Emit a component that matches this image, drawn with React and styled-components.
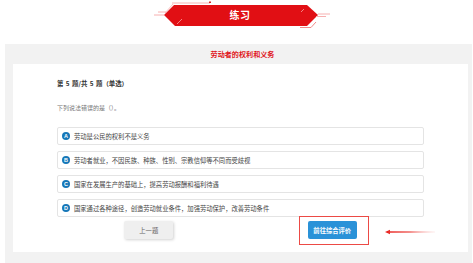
import React from 'react'
import styled, { createGlobalStyle } from 'styled-components'

const Global = createGlobalStyle`
  html, body { margin: 0; padding: 0; background: #fff; }
  body { font-family: "Noto Sans CJK SC", "Noto Sans", sans-serif; }
`

const options = [
  { key: 'A', text: '劳动是公民的权利不是义务' },
  { key: 'B', text: '劳动者就业，不因民族、种族、性别、宗教信仰等不同而受歧视' },
  { key: 'C', text: '国家在发展生产的基础上，提高劳动报酬和福利待遇' },
  { key: 'D', text: '国家通过各种途径，创造劳动就业条件，加强劳动保护，改善劳动条件' },
]

const Banner = () => (
  <BannerWrap>
    <BannerSvg viewBox="0 0 180 32" width="180" height="32">
      <path d="M22 3 H60" stroke="#f7b4b4" strokeWidth="1" />
      <rect x="59" y="1.5" width="2" height="1.5" fill="#d42a2a" />
      <path d="M15 13 L23 4" stroke="#f9c4c4" strokeWidth="1" />
      <path d="M8 12 H16 M4 15 H14" stroke="#f7b0b0" strokeWidth="1" />
      <polygon points="14,15 24,5 157,5 168,15 157,26 25,26" fill="#e10f14" />
      <path d="M27 24 L32 19" stroke="#f6a0a0" strokeWidth="0.8" />
      <path d="M151 12 L154 9" stroke="#f6a0a0" strokeWidth="0.8" />
      <path d="M168 14 H180 M166 16.5 H176" stroke="#f7b0b0" strokeWidth="1" />
      <path d="M150 27.5 H161 L166 22" stroke="#f28a8a" strokeWidth="1" fill="none" />
    </BannerSvg>
    <BannerText>练习</BannerText>
  </BannerWrap>
)

export default function App() {
  return (
    <Page>
      <Global />
      <Banner />
      <Panel>
        <Title>劳动者的权利和义务</Title>
        <Card>
          <Meta>第 5 题/共 5 题（单选）</Meta>
          <Question>下列说法错误的是（）。</Question>
          <OptionList>
            {options.map((o) => (
              <Option key={o.key}>
                <Badge>{o.key}</Badge>
                <OptionText>{o.text}</OptionText>
              </Option>
            ))}
          </OptionList>
          <Actions>
            <PrevButton>上一题</PrevButton>
            <Highlight>
              <NextButton>前往综合评价</NextButton>
              <Frame />
              <Arrow viewBox="0 0 50 6" width="50" height="6">
                <defs>
                  <linearGradient id="arrowFade" x1="0" x2="1" y1="0" y2="0">
                    <stop offset="0" stopColor="#e8201c" />
                    <stop offset="0.5" stopColor="#f06a66" />
                    <stop offset="1" stopColor="#fde3e2" stopOpacity="0.4" />
                  </linearGradient>
                </defs>
                <polygon points="0,3 5,0.8 5,2.2 50,2.2 50,3.8 5,3.8 5,5.2" fill="url(#arrowFade)" />
              </Arrow>
            </Highlight>
          </Actions>
        </Card>
      </Panel>
    </Page>
  )
}

const Page = styled.div`
  width: 473px;
  height: 263px;
  overflow: hidden;
  display: flex;
  flex-direction: column;
`

const BannerWrap = styled.div`
  position: relative;
  height: 44px;
  display: flex;
  justify-content: center;
  padding-left: 7px;
`

const BannerSvg = styled.svg`
  display: block;
`

const BannerText = styled.div`
  position: absolute;
  top: 8px;
  left: 0;
  right: 0;
  padding-left: 7px;
  text-align: center;
  color: #fff;
  font-size: 10px;
  font-weight: 700;
  line-height: 14px;
  letter-spacing: 0.5px;
`

const Panel = styled.div`
  margin: 0 1px 0 5px;
  background: #f2f2f2;
  padding: 0 4px 10px 8px;
  flex: 1;
`

const Title = styled.div`
  height: 20px;
  display: flex;
  align-items: center;
  justify-content: center;
  padding-left: 4px;
  color: #e0161c;
  font-size: 7.1px;
  font-weight: 700;
`

const Card = styled.div`
  background: #fff;
  padding: 15px 44px 13px 44px;
`

const Meta = styled.div`
  font-size: 6.4px;
  line-height: 10px;
  color: #333;
  font-weight: 700;
  word-spacing: 1px;
`

const Question = styled.div`
  margin-top: 14px;
  font-size: 6px;
  line-height: 10px;
  color: #777;
`

const OptionList = styled.div`
  margin-top: 14px;
  display: flex;
  flex-direction: column;
  gap: 6px;
`

const Option = styled.div`
  height: 18px;
  box-sizing: border-box;
  border: 1px solid #e4e4e4;
  border-radius: 2px;
  display: flex;
  align-items: center;
  padding-left: 4px;
  gap: 4px;
`

const Badge = styled.span`
  width: 8px;
  height: 8px;
  border-radius: 50%;
  background: #1677b8;
  color: #fff;
  font-family: "Liberation Sans", sans-serif;
  font-size: 5.5px;
  font-weight: 700;
  display: flex;
  align-items: center;
  justify-content: center;
`

const OptionText = styled.span`
  font-size: 6.3px;
  color: #444;
`

const Actions = styled.div`
  margin-top: 4px;
  display: flex;
  justify-content: space-around;
`

const ButtonBase = styled.div`
  width: 49px;
  height: 18px;
  border-radius: 2px;
  display: flex;
  align-items: center;
  justify-content: center;
  font-size: 6.3px;
`

const PrevButton = styled(ButtonBase)`
  background: #efefef;
  color: #666;
  box-shadow: 1px 1px 3px rgba(0, 0, 0, 0.18);
`

const NextButton = styled(ButtonBase)`
  background: #2a92d8;
  color: #fff;
  font-weight: 700;
`

const Highlight = styled.div`
  position: relative;
`

const Frame = styled.div`
  position: absolute;
  top: -5px;
  bottom: -6px;
  left: -9px;
  right: -12px;
  border: 1px solid #ec4a45;
`

const Arrow = styled.svg`
  position: absolute;
  top: 8px;
  right: -78px;
  display: block;
`
